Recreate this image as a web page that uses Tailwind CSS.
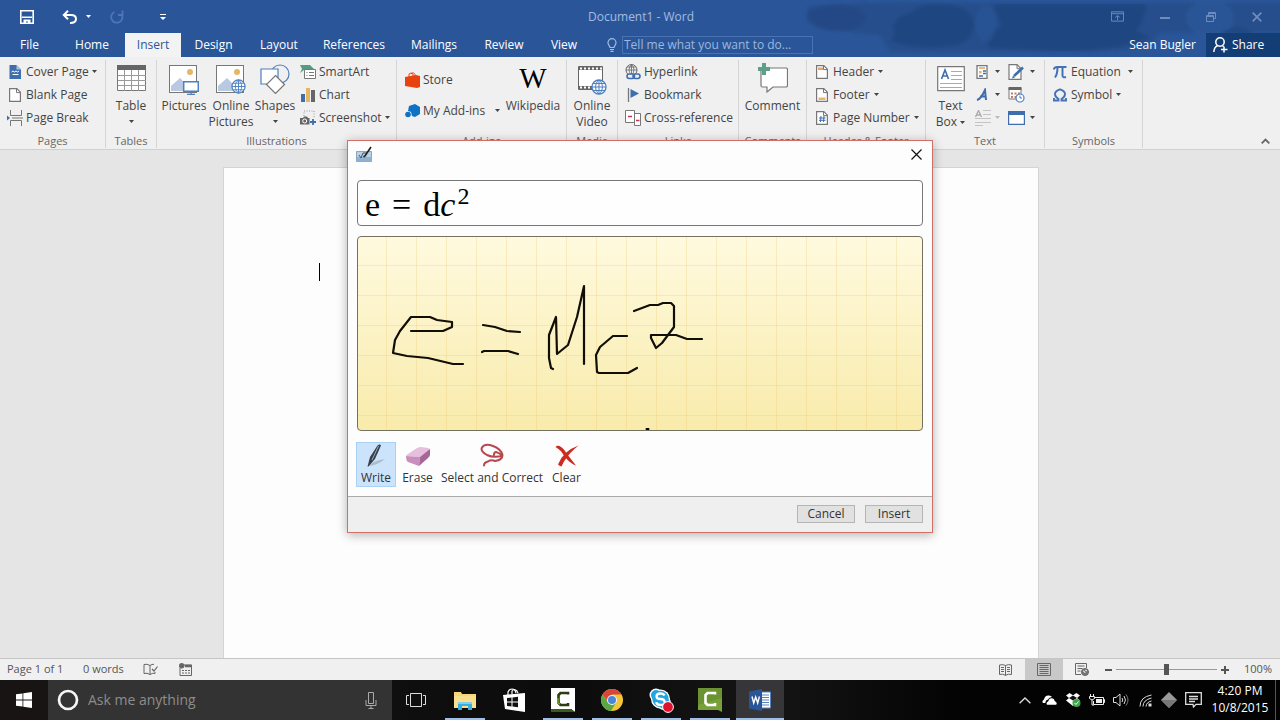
<!DOCTYPE html>
<html lang="en">
<head>
<meta charset="utf-8">
<meta name="viewport" content="width=device-width, initial-scale=1">
<title>Document1 - Word</title>
<script src="https://cdn.jsdelivr.net/npm/@tailwindcss/browser@4"></script>
</head>
<body class="relative flex h-screen min-h-[560px] flex-col overflow-hidden bg-[#e5e5e5] font-['Open_Sans','Noto_Sans',sans-serif] text-xs text-[#444]">

<svg class="hidden" aria-hidden="true">
  <symbol id="arrow" viewBox="0 0 5 3"><path d="M0 0h5L2.5 3z" fill="currentColor"/></symbol>
  <symbol id="globe" viewBox="0 0 16 16"><circle cx="8" cy="8" r="7" fill="#fff" stroke="#4d7fc1" stroke-width="1.3"/><path d="M8 1v14M1 8h14M2.2 4.5h11.6M2.2 11.5h11.6M8 1C3.5 4 3.5 12 8 15M8 1c4.500 3 4.500 11 0 14" fill="none" stroke="#4d7fc1"/></symbol>
  <symbol id="photo" viewBox="0 0 28 28"><rect x=".5" y=".5" width="27" height="27" fill="#fff" stroke="#777"/><circle cx="21" cy="7" r="3" fill="#e6b667"/><path d="M2 26v-5l9-8 7 7 3-2 5 4v4z" fill="#b9c9e2"/></symbol>
  <symbol id="sheet" viewBox="0 0 12 14"><path d="M.6.6h7.200l3.600 3.600v9.200H.6z" fill="#fff" stroke="#777" stroke-width="1.2"/><path d="M7.500.6v4h4" fill="none" stroke="#777"/></symbol>
</svg>

<header class="relative shrink-0 bg-[#2a5699] text-white">
  <svg class="absolute top-0 right-0 h-[57px] w-[480px]" viewBox="0 0 480 57" fill="#20467f" aria-hidden="true">
    <defs><filter id="soft" x="-5%" y="-20%" width="110%" height="140%"><feGaussianBlur stdDeviation="1.500"/></filter></defs>
    <g filter="url(#soft)">
      <path opacity=".5" d="M8 6Q80 0 200 3h290v30H360q-10 18-60 19H90L80 36 30 30Q0 22 8 6z"/>
      <ellipse cx="36" cy="18" rx="30" ry="13" opacity=".5"/>
      <path opacity=".9" d="M92 26q8-12 20-14 10-10 35-7 25 1 27 20-2 17-18 20-40 6-66-4 8-6 2-15z"/>
      <path opacity=".9" d="M194 4h152q-2 20-10 26l14 8q-40 14-90 13l-70-3-6-9 18-14q-6-10-8-21z"/>
      <ellipse cx="410" cy="18" rx="24" ry="18" fill="#2a5699" opacity=".8"/>
      <ellipse cx="186" cy="24" rx="10" ry="18" fill="#2a5699" opacity=".6"/>
      <path d="M422 32q16-10 32 2h-32z" opacity=".7"/>
    </g>
  </svg>
  <div class="relative flex h-[33px] items-center">
    <nav aria-label="Quick access" class="flex flex-1 items-center pl-5">
      <button aria-label="Save"><svg class="h-[14px] w-[14px]" viewBox="0 0 14 14"><path d="M.8.8h12.400v12.400H.8z" fill="none" stroke="#fff" stroke-width="1.600"/><path d="M2 6.500h10V8H2zM3.500 9.500h7v4H8v-2H6v2H3.500z" fill="#fff"/></svg></button>
      <button aria-label="Undo" class="ml-7"><svg class="h-[14px] w-4" viewBox="0 0 16 14" fill="none" stroke="#fff" stroke-width="2"><path d="M6 .8L1.800 5 6 9.200M2 5h7q5 0 5 4t-6 4"/></svg></button>
      <button aria-label="Undo list" class="ml-2"><svg class="h-[3px] w-[5px]"><use href="#arrow"/></svg></button>
      <button aria-label="Repeat" class="ml-[19px] text-[#5075b6]"><svg class="h-[14px] w-[14px]" viewBox="0 0 14 14" fill="none" stroke="currentColor" stroke-width="1.800"><path d="M4.500 2A5.600 5.600 0 1 0 12 5M8 5h4.500V.5"/></svg></button>
      <button aria-label="Customize" class="ml-9"><svg class="h-[6px] w-[6px]" viewBox="0 0 6 6" fill="#fff"><path d="M0 0h6v1H0zM0 3h6L3 6z"/></svg></button>
    </nav>
    <h1 class="text-[#a3bbe0]">Document1 - Word</h1>
    <div class="flex flex-1 items-center justify-end gap-9 pr-[18px] text-[#6f8cbf]">
      <button aria-label="Ribbon display options"><svg class="h-[11px] w-[13px]" viewBox="0 0 14 11" fill="none" stroke="currentColor"><path d="M.5.5h13v10H.5zM.5 2.500h13M7 9.500V5M4.500 6.500L7 4.500l2.500 2"/></svg></button>
      <button aria-label="Minimize"><svg class="h-[10px] w-[10px]" viewBox="0 0 10 10" fill="currentColor"><path d="M0 5h10v2H0z"/></svg></button>
      <button aria-label="Restore"><svg class="h-[10px] w-[10px]" viewBox="0 0 10 10" fill="none" stroke="currentColor"><path d="M.5 3.500h7v6h-7zM.5 4.500h7M2.500 3V.5h7v6H8M2.500 1.500h7"/></svg></button>
      <button aria-label="Close"><svg class="h-[10px] w-[10px]" viewBox="0 0 10 10" fill="none" stroke="currentColor" stroke-width="1.700"><path d="M.7.7l8.600 8.600M9.300.7L.7 9.300"/></svg></button>
    </div>
  </div>
  <div class="relative flex h-6 items-stretch">
    <nav aria-label="Ribbon tabs" class="flex">
      <button class="w-[59px]">File</button>
      <button class="w-[66px]">Home</button>
      <button class="w-14 bg-[#f3f3f3] text-[#2a5699]">Insert</button>
      <button class="w-[65px]">Design</button>
      <button class="w-[66px]">Layout</button>
      <button class="w-[84px]">References</button>
      <button class="w-[76px]">Mailings</button>
      <button class="w-16">Review</button>
      <button class="w-14">View</button>
    </nav>
    <label for="tell" class="ml-[15px] flex w-[15px] items-center" aria-label="Tell me"><svg class="h-[14px] w-[10px]" viewBox="0 0 10 14" fill="none" stroke="#a3bbe0" stroke-width="1.200"><path d="M3 9.500C3 8 1 7 1 4.700a4 4 0 0 1 8 0C9 7 7 8 7 9.500zM3 11.500h4M3.500 13.300h3"/></svg></label>
    <input id="tell" type="text" placeholder="Tell me what you want to do..." class="mt-[3px] h-[18px] w-[191px] border border-[#4a71b0] px-px pb-px text-xs text-white outline-none placeholder:text-[#9db6de]">
    <div class="ml-auto flex items-center">
      <a href="#account" class="mr-[10px]">Sean Bugler</a>
      <button class="flex h-6 w-[74px] items-center gap-1 bg-[#133d75] pl-[7px]"><svg class="h-4 w-[15px]" viewBox="0 0 15 16" fill="none" stroke="#fff" stroke-width="1.500"><circle cx="7" cy="5" r="4.200"/><path d="M5 8.500Q1 10 .8 15M9 8.500l1.500 1M11 9.500v6M8 12.500h6.500"/></svg>Share</button>
    </div>
  </div>
</header>

<section aria-label="Insert ribbon" class="flex h-[93px] shrink-0 border-b border-[#d0d0d0] bg-[#f0f0f0] pt-[3px] pb-px leading-4">
  <div class="flex w-[106px] shrink-0 flex-col border-r border-[#d5d5d5]">
    <div class="flex h-[74px] flex-col pl-[7px]">
      <button class="flex h-[23px] items-center gap-[3px]"><svg class="h-[14px] w-4" viewBox="0 0 16 14"><path d="M2.500 0h7L14 4.500V14H2.500z" fill="#3f6eae"/><path d="M9.500 0v4.500H14" fill="#a9c2e4"/><path d="M4.500 7l1.500-1 1.500 1L9 6l1.500 1L12 6M5.500 9.500h6" stroke="#fff" fill="none"/></svg>Cover Page<svg class="h-[3px] w-[5px]"><use href="#arrow"/></svg></button>
      <button class="flex h-[23px] items-center gap-[3px]"><svg class="h-[14px] w-4"><use href="#sheet"/></svg>Blank Page</button>
      <button class="flex h-[23px] items-center gap-[3px]"><svg class="h-4 w-4" viewBox="0 0 16 16" fill="none" stroke="#777"><path d="M3.500 0v5.500h11V0M3.500 16v-5.500h11V16M5 8h11"/><path d="M0 5.500v5L3 8z" fill="#3f6eae" stroke="none"/></svg>Page Break</button>
    </div>
    <h2 class="text-center text-[11px] leading-[14px] text-[#666]">Pages</h2>
  </div>
  <div class="flex w-[51px] shrink-0 flex-col border-r border-[#d5d5d5]">
    <button class="flex h-[74px] flex-col items-center pt-[5px]"><svg class="mb-[6px] h-[27px] w-[29px] shrink-0" viewBox="0 0 29 27"><path d="M.5.5h28v25H.5z" fill="#fff" stroke="#777"/><path d="M0 0h29v5H0z" fill="#666"/><path d="M7.500 5v21M14.500 5v21M21.500 5v21M1 10.500h28M1 15.500h28M1 20.500h28" stroke="#999"/></svg>Table<svg class="mt-1.5 h-[3px] w-[5px] shrink-0"><use href="#arrow"/></svg></button>
    <h2 class="text-center text-[11px] leading-[14px] text-[#666]">Tables</h2>
  </div>
  <div class="flex w-[240px] shrink-0 flex-col border-r border-[#d5d5d5]">
    <div class="flex h-[74px] pl-1">
      <button class="flex w-[46px] flex-col items-center whitespace-nowrap pt-[5px]"><svg class="mb-[3px] h-[30px] w-[30px] shrink-0" viewBox="0 0 30 30"><use href="#photo" width="28" height="28"/><path d="M14.700 16.700h14.600v9.600H14.700z" fill="#fff" stroke="#4d7fc1" stroke-width="1.500"/><path d="M22 26v3M18 29.300h8" stroke="#4d7fc1" stroke-width="1.300"/></svg>Pictures</button>
      <button class="flex w-[48px] flex-col items-center whitespace-nowrap pt-[5px]"><svg class="mb-[3px] h-[30px] w-[30px] shrink-0" viewBox="0 0 30 30"><use href="#photo" width="28" height="28"/><use href="#globe" x="15" y="14" width="15" height="15"/></svg><span>Online<br>Pictures</span></button>
      <button class="flex w-[40px] flex-col items-center whitespace-nowrap pt-1"><svg class="mb-1 h-[30px] w-[30px] shrink-0" viewBox="0 0 30 30" fill="#fff" stroke="#4d7fc1" stroke-width="1.200"><circle cx="20" cy="10" r="9" fill="#f0f0f0"/><path d="M1 5h17v15H1z"/><path d="M15.500 11.500l9 9-9 9-9-9z" stroke="#777" /></svg>Shapes<svg class="mt-1.5 h-[3px] w-[5px] shrink-0"><use href="#arrow"/></svg></button>
      <div class="ml-[5px] flex flex-col whitespace-nowrap">
        <button class="flex h-[23px] items-center gap-[3px]"><svg class="h-4 w-4" viewBox="0 0 16 16"><path d="M0 1h10l4 4h-4v3H4V6L0 9l2-4z" fill="#579c80"/><path d="M4.500 5.500h11v9h-11z" fill="#fff" stroke="#777"/><path d="M6.500 8.500h1M9 8.500h5M6.500 11.500h1M9 11.500h5" stroke="#777"/></svg>SmartArt</button>
        <button class="flex h-[23px] items-center gap-[3px]"><svg class="h-[14px] w-4" viewBox="0 0 16 14"><path d="M1 6h4v8H1z" fill="#3f6eae"/><path d="M6 0h4v14H6z" fill="#e6b667"/><path d="M11 2h4v12h-4z" fill="#666"/></svg>Chart</button>
        <button class="flex h-[23px] items-center gap-[3px]"><svg class="h-4 w-4" viewBox="0 0 16 16"><path d="M4 6V1h10v7" fill="none" stroke="#999" stroke-dasharray="1 1.500"/><path d="M0 8h3l1-1.500h3L8 8h1.500v6.500H0z" fill="#666"/><circle cx="4.700" cy="11" r="2" fill="#666" stroke="#fff"/><path d="M13 9v6M10 12h6" stroke="#3f6eae" stroke-width="1.800"/></svg>Screenshot<svg class="h-[3px] w-[5px]"><use href="#arrow"/></svg></button>
      </div>
    </div>
    <h2 class="text-center text-[11px] leading-[14px] text-[#666]">Illustrations</h2>
  </div>
  <div class="flex w-[170px] shrink-0 flex-col border-r border-[#d5d5d5]">
    <div class="flex h-[74px] pl-2">
      <div class="flex w-[95px] flex-col gap-2 pt-2 whitespace-nowrap">
        <button class="flex h-[23px] items-center gap-[3px]"><svg class="h-4 w-[15px]" viewBox="0 0 15 16"><path d="M0 5l11-2 4 1v11l-3 1-12-2z" fill="#e8420f"/><path d="M4 6V2q2-2 4 0v3M6 1.500q3-2 4 1v2" fill="none" stroke="#e8420f"/></svg>Store</button>
        <button class="flex h-[23px] items-center gap-[3px]"><svg class="h-[14px] w-[15px]" viewBox="0 0 15 14" fill="#1072c4"><path d="M4 2l6-2 5 3v7l-5 3-3-1-1-4-3-1z"/><circle cx="3" cy="10.500" r="2.800"/></svg>My Add-ins<svg class="mr-0 ml-auto h-[3px] w-[5px]"><use href="#arrow"/></svg></button>
      </div>
      <button class="flex flex-1 flex-col items-center pt-[3px]"><span class="mb-[5px] h-[30px] font-['Liberation_Serif',serif] text-[29px] leading-[31px] text-black">W</span>Wikipedia</button>
    </div>
    <h2 class="text-center text-[11px] leading-[14px] text-[#666]">Add-ins</h2>
  </div>
  <div class="flex w-[51px] shrink-0 flex-col border-r border-[#d5d5d5]">
    <button class="flex h-[74px] flex-col items-center pt-[6px]"><svg class="mb-[2px] h-[30px] w-[29px] shrink-0" viewBox="0 0 29 30"><path d="M.5.5h24v23H.5z" fill="#fff" stroke="#666"/><path d="M1 2.500h23M1 21.500h23" stroke="#666" stroke-width="3"/><path d="M2 2.500h22M2 21.500h22" stroke="#fff" stroke-width="2" stroke-dasharray="2 2"/><use href="#globe" x="13" y="13" width="16" height="16"/></svg><span>Online<br>Video</span></button>
    <h2 class="text-center text-[11px] leading-[14px] text-[#666]">Media</h2>
  </div>
  <div class="flex w-[121px] shrink-0 flex-col border-r border-[#d5d5d5]">
    <div class="flex h-[74px] flex-col pl-[7px] whitespace-nowrap">
      <button class="flex h-[23px] items-center gap-[3px]"><svg class="h-4 w-4" viewBox="0 0 16 16" fill="none"><circle cx="6.500" cy="6" r="5.500" stroke="#666"/><path d="M1 6h11M6.500.5v11M2 3h9M6.500.5q-5 5 0 11M6.500.5q5 5 0 11" stroke="#666" stroke-width=".8"/><rect x="2" y="10" width="7.500" height="4.500" rx="2.200" stroke="#3f6eae" stroke-width="1.600" fill="#f0f0f0"/><rect x="8" y="10" width="7" height="4.500" rx="2.200" stroke="#3f6eae" stroke-width="1.600"/></svg>Hyperlink</button>
      <button class="flex h-[23px] items-center gap-[3px]"><svg class="h-[14px] w-4" viewBox="0 0 16 14"><path d="M3.500 0v14" stroke="#777" stroke-width="1.300"/><path d="M5.500 1L14 5.500 5.500 10z" fill="#3f6eae"/></svg>Bookmark</button>
      <button class="flex h-[23px] items-center gap-[3px]"><svg class="h-4 w-4" viewBox="0 0 16 16" fill="#fff" stroke="#777"><path d="M9.500 3.500h6v12h-6z"/><path d="M.5.5h9v12h-9z"/><path d="M11 10.500h3.500M3 6.500h4" stroke="#c0394f" stroke-width="1.500"/></svg>Cross-reference</button>
    </div>
    <h2 class="text-center text-[11px] leading-[14px] text-[#666]">Links</h2>
  </div>
  <div class="flex w-[68px] shrink-0 flex-col border-r border-[#d5d5d5]">
    <button class="flex h-[74px] flex-col items-center pt-[3px]"><svg class="mb-[5px] h-[30px] w-[30px] shrink-0" viewBox="0 0 30 30"><path d="M3 5h25q1.500 0 1.500 1.500v16q0 1.500-1.500 1.500H15l-6 5v-5H4.500Q3 24 3 22.500z" fill="#fff" stroke="#777" stroke-width="1.200"/><path d="M6 0v12M0 6h12" stroke="#5d9f8b" stroke-width="4"/></svg>Comment</button>
    <h2 class="text-center text-[11px] leading-[14px] text-[#666]">Comments</h2>
  </div>
  <div class="flex w-[119px] shrink-0 flex-col border-r border-[#d5d5d5]">
    <div class="flex h-[74px] flex-col pl-2 whitespace-nowrap">
      <button class="flex h-[23px] items-center gap-1"><svg class="h-[14px] w-[14px]" viewBox="0 0 14 14"><use href="#sheet" x="1" width="12" height="14"/><path d="M3 2.500h5v2.500H3z" fill="#e6a567"/></svg>Header<svg class="h-[3px] w-[5px]"><use href="#arrow"/></svg></button>
      <button class="flex h-[23px] items-center gap-1"><svg class="h-[14px] w-[14px]" viewBox="0 0 14 14"><use href="#sheet" x="1" width="12" height="14"/><path d="M3.500 9.500h7V12h-7z" fill="#e6b667"/></svg>Footer<svg class="h-[3px] w-[5px]"><use href="#arrow"/></svg></button>
      <button class="flex h-[23px] items-center gap-1"><svg class="h-[14px] w-[14px]" viewBox="0 0 14 14"><use href="#sheet" x="1" width="12" height="14"/><path d="M6 5l-.5 6M9 5l-.5 6M4 7h6.500M4 9.300h6.500" stroke="#3f6eae"/></svg>Page Number<svg class="h-[3px] w-[5px]"><use href="#arrow"/></svg></button>
    </div>
    <h2 class="text-center text-[11px] leading-[14px] text-[#666]">Header &amp; Footer</h2>
  </div>
  <div class="flex w-[119px] shrink-0 flex-col border-r border-[#d5d5d5]">
    <div class="flex h-[74px]">
      <button class="flex w-[49px] flex-col items-center pt-[5px]"><svg class="mb-[6px] h-[27px] w-[28px] shrink-0" viewBox="0 0 28 27"><path d="M.7 1.700h26.600v24H.7z" fill="#fff" stroke="#777" stroke-width="1.200"/><path d="M4.500 14L8 5l3.500 9M5.500 11h5" fill="none" stroke="#3f6eae" stroke-width="1.600"/><path d="M14 6.500h11M14 10.500h11M14 14.500h11M3 18.500h22M3 22.500h22" stroke="#aaa"/></svg><span>Text<br>Box <svg class="inline h-[3px] w-[5px] align-middle"><use href="#arrow"/></svg></span></button>
      <div class="flex flex-col">
        <button aria-label="Quick Parts" class="flex h-[23px] w-[31px] items-center gap-[6px]"><svg class="h-[14px] w-[14px]" viewBox="0 0 14 14" fill="none"><path d="M2 .7h10v12.600H2z" fill="#fff" stroke="#777" stroke-width="1.300"/><path d="M4 3h6" stroke="#e6a04f" stroke-width="1.500"/><path d="M4 6h2.500v2.500H4z" fill="#e6b667"/><path d="M8 6h3M8 8.500h3M4 11h4" stroke="#3f6eae" stroke-width="1.300"/></svg><svg class="h-[3px] w-[5px]"><use href="#arrow"/></svg></button>
        <button aria-label="WordArt" class="flex h-[23px] w-[31px] items-center gap-[6px]"><svg class="h-[14px] w-[14px]" viewBox="0 0 14 14" fill="none" stroke="#3f6eae" stroke-width="2"><path d="M2 12q4-1 8-10l1 10M5 8.500h6.500"/></svg><svg class="h-[3px] w-[5px]"><use href="#arrow"/></svg></button>
        <button aria-label="Drop Cap" class="flex h-[23px] w-[31px] items-center gap-1 text-[#bbb]"><svg class="h-4 w-4" viewBox="0 0 16 16" fill="none" stroke="#aaa"><path d="M.5 7L3.500.5 6.500 7M1.500 5h4" stroke-width="1.300"/><path d="M8 .5h8M8 4.500h8M0 8.500h16M0 12.500h16M0 15.500h8" stroke="#c4c4c4"/></svg><svg class="h-[3px] w-[5px]"><use href="#arrow"/></svg></button>
      </div>
      <div class="flex flex-col pl-[2px]">
        <button aria-label="Signature Line" class="flex h-[23px] items-center gap-x-[5px]"><svg class="h-4 w-[17px]" viewBox="0 0 17 16"><path d="M1 .7h8l4 4v10.600H1z" fill="#fff" stroke="#777" stroke-width="1.200"/><path d="M9 .7v4h4" fill="none" stroke="#777"/><path d="M6 12l9-8.500" stroke="#3f6eae" stroke-width="2.600"/><path d="M4 14.500l1-3 2 2z" fill="#3f6eae"/></svg><svg class="h-[3px] w-[5px]"><use href="#arrow"/></svg></button>
        <button aria-label="Date and Time" class="flex h-[23px] items-center"><svg class="h-4 w-[17px]" viewBox="0 0 17 16" fill="none"><path d="M1 1h12v11H1z" fill="#fff" stroke="#777"/><path d="M.5 0h13v3H.5z" fill="#666"/><path d="M3 5.500h2v2H3zM6.500 5.500h2v2h-2zM10 5.500h2v2h-2zM3 9h2v2H3zM6.500 9h2v2h-2z" fill="#cf7a52"/><circle cx="12" cy="11" r="4" fill="#fff" stroke="#4d7fc1" stroke-width="1.200"/><path d="M12 8.500V11h2" stroke="#4d7fc1"/></svg></button>
        <button aria-label="Object" class="flex h-[23px] items-center gap-x-[5px]"><svg class="h-[14px] w-[17px]" viewBox="0 0 17 14"><path d="M.6.6h15.800v12.800H.6z" fill="#fff" stroke="#3f6eae" stroke-width="1.200"/><path d="M0 0h17v4H0z" fill="#3f6eae"/></svg><svg class="h-[3px] w-[5px]"><use href="#arrow"/></svg></button>
      </div>
    </div>
    <h2 class="text-center text-[11px] leading-[14px] text-[#666]">Text</h2>
  </div>
  <div class="flex w-[98px] shrink-0 flex-col border-r border-[#d5d5d5]">
    <div class="flex h-[74px] flex-col pl-2 whitespace-nowrap">
      <button class="flex h-[23px] items-center gap-1"><svg class="h-[14px] w-[14px]" viewBox="0 0 14 14" fill="none" stroke="#4472b8" stroke-width="2"><path d="M.5 4.500Q1.500 2 4 2h9.500M4.500 2.500Q4.500 9 2 12.500M9.500 2.500v8q0 2.500 3.500 1.500"/></svg>Equation<svg class="mr-[9px] ml-auto h-[3px] w-[5px]"><use href="#arrow"/></svg></button>
      <button class="flex h-[23px] items-center gap-1"><svg class="h-[14px] w-[14px]" viewBox="0 0 14 14" fill="none" stroke="#4472b8" stroke-width="1.900"><path d="M1 10v2.500h4.500V11Q2 9 2 6t5-4.700Q12 3 12 6t-3.500 5v1.500H13V10"/></svg>Symbol<svg class="h-[3px] w-[5px]"><use href="#arrow"/></svg></button>
    </div>
    <h2 class="text-center text-[11px] leading-[14px] text-[#666]">Symbols</h2>
  </div>
  <button aria-label="Collapse the ribbon" class="mt-auto mr-[10px] mb-[4px] ml-auto"><svg class="h-[6px] w-[9px]" viewBox="0 0 9 6" fill="none" stroke="#666" stroke-width="1.800"><path d="M.7 5.300L4.500 1.500l3.800 3.800"/></svg></button>
</section>

<main class="flex min-h-0 flex-1 justify-center overflow-hidden pt-[17px] pr-[18px]">
  <article aria-label="Page 1" class="w-[816px] max-w-full border border-b-0 border-[#d4d4d4] bg-[#fdfdfd] pt-[95px] pl-[95px]"><div class="h-[18px] w-px bg-black"></div></article>
</main>

<footer class="flex h-[22px] shrink-0 items-center border-t border-[#c6c6c6] bg-[#f0f0f0] pl-[7px] text-[11px] text-[#555]">
  <span class="w-[76px]">Page 1 of 1</span>
  <span class="w-[60px]">0 words</span>
  <button aria-label="Proofing"><svg class="h-[13px] w-[15px]" viewBox="0 0 15 13" fill="none" stroke="#666"><path d="M7 2.500Q4 .5 1 1.500v9q3-1 6 1zM7 2.500Q9 1 11 1.300M7 11.500q3-2 5-1V9" /><path d="M9 6l2 2 3.500-4.500" stroke-width="1.200"/></svg></button>
  <button aria-label="Macro recording" class="ml-[21px]"><svg class="h-[13px] w-[13px]" viewBox="0 0 13 13" fill="none" stroke="#666"><path d="M1 5v7.500h11.500V2H5"/><path d="M6 3h7" stroke-width="2.500"/><path d="M3 7.500h8M3 10h8" stroke-dasharray="2 1"/><circle cx="2.700" cy="2.700" r="2.700" fill="#666" stroke="none"/></svg></button>
  <div class="ml-auto flex h-full items-center">
    <button aria-label="Read mode"><svg class="h-3 w-[13px]" viewBox="0 0 13 12" fill="none" stroke="#666"><path d="M6.500 1.500Q4 0 .5 1v9.500q3-1 6 .8 3-1.800 6-.8V1q-3.500-1-6 .5zM6.500 1.500v10M2 3.500h3M2 5.500h3M2 7.500h3M8 3.500h3M8 5.500h3M8 7.500h3"/></svg></button>
    <button aria-label="Print layout" class="ml-[13px] flex h-full w-[38px] items-center justify-center bg-[#c8c8c8]"><svg class="h-[13px] w-[14px]" viewBox="0 0 14 13" fill="none" stroke="#666"><path d="M.5.5h13v12H.5zM2.500 2.500h9M2.500 4.500h9M2.500 6.500h9M2.500 8.500h9M2.500 10.500h9"/></svg></button>
    <button aria-label="Web layout" class="ml-3"><svg class="h-[13px] w-[14px]" viewBox="0 0 14 13" fill="none" stroke="#666"><path d="M6 11.500H.5V.5h11V5M2.500 3h7M2.500 5.500h5M2.500 8h3"/><circle cx="10" cy="9" r="3.500" fill="#777"/><path d="M8 8q2 0 2 2M10 7l2 1" stroke="#eee"/></svg></button>
    <button aria-label="Zoom out" class="ml-4"><svg class="h-2 w-[7px]" viewBox="0 0 7 8" fill="#555"><path d="M0 3h7v2H0z"/></svg></button>
    <input type="range" aria-label="Zoom" min="0" max="100" value="50" class="mx-1 h-3 w-[101px] appearance-none bg-[linear-gradient(#999,#999)] bg-[length:100%_1px] bg-center bg-no-repeat [&::-webkit-slider-thumb]:h-[11px] [&::-webkit-slider-thumb]:w-[5px] [&::-webkit-slider-thumb]:appearance-none [&::-webkit-slider-thumb]:bg-[#555]">
    <button aria-label="Zoom in"><svg class="h-2 w-2" viewBox="0 0 8 8" fill="#555"><path d="M3 0h2v3h3v2H5v3H3V5H0V3h3z"/></svg></button>
    <span class="w-[51px] pr-[8px] text-right">100%</span>
  </div>
</footer>

<nav aria-label="Taskbar" class="flex h-10 shrink-0 items-stretch bg-[linear-gradient(90deg,#181414,#0c0c0c_45%,#151515_60%,#030303_75%)] text-white">
  <button aria-label="Start" class="flex w-12 items-center justify-center"><svg class="h-4 w-4" viewBox="0 0 16 16" fill="#fff"><path d="M0 2.300L6.500 1.400v6.100H0zM7.300 1.300L16 0v7.500H7.300zM0 8.400h6.500v6.200L0 13.700zM7.300 8.400H16V16l-8.700-1.300z"/></svg></button>
  <label for="ask" class="flex w-[344px] items-center bg-[#333] pl-[9px]">
    <svg class="h-[22px] w-[22px] shrink-0" viewBox="0 0 22 22"><circle cx="11" cy="11" r="9" fill="none" stroke="#f5f5f5" stroke-width="2.700"/></svg>
    <input id="ask" type="text" placeholder="Ask me anything" class="ml-[9px] min-w-0 flex-1 bg-transparent text-sm outline-none placeholder:text-[#8d8d8d]">
    <svg class="mr-[15px] h-[17px] w-3 shrink-0" viewBox="0 0 12 17" fill="none" stroke="#aaa"><path d="M3.500.5h5v11h-5zM1 8v5.500h10V8M6 13.500v3M3.500 16.500h5"/></svg>
  </label>
  <button aria-label="Task view" class="flex w-12 items-center justify-center"><svg class="h-[14px] w-5" viewBox="0 0 20 14" fill="none" stroke="#ddd"><path d="M4.500.5h11v13h-11zM3 2.500H.5v9H3M17 2.500h2.500v9H17"/></svg></button>
  <button aria-label="File Explorer" class="flex w-[50px] items-center justify-center"><span class="flex h-full w-10 items-center justify-center border-t-2 border-b-2 border-t-transparent border-b-[#9fbfe8]"><svg class="h-[19px] w-[22px]" viewBox="0 0 22 19"><path d="M0 1h7l1 2h14v14H0z" fill="#f5d877"/><path d="M0 5h22v12H0z" fill="#f8e08e"/><path d="M4 19v-8h14v8h-4v-4H8v4z" fill="#3aaee0"/><path d="M4 11h14v2H4z" fill="#7fd0ef"/></svg></span></button>
  <button aria-label="Store" class="flex w-12 items-center justify-center"><svg class="h-6 w-[22px]" viewBox="0 0 22 24"><path d="M0 7l22-2v19L2 21z" fill="#fff"/><path d="M5 7V4q1-3 4-3t4 4M9 6V3q2-3 5 0l1 2" fill="none" stroke="#fff" stroke-width="1.200"/><path d="M4 10l4.500-.5v4H4zM9.500 9.400l5.500-.6v4.700H9.500zM4 14.500h4.500v4L4 18zM9.500 14.500H15v4.800l-5.500-.7z" fill="#111"/></svg></button>
  <button aria-label="Camtasia" class="flex w-[50px] items-center justify-center"><span class="flex h-full w-10 items-center justify-center border-t-2 border-b-2 border-t-transparent border-b-[#9fbfe8]"><svg class="h-6 w-6" viewBox="0 0 24 24"><path d="M0 0h24v24l-4-3H0z" fill="#fff"/><path d="M0 21h20l4 3H0z" fill="#3c5a1b"/><path d="M17 6.500V5H9.500L7.500 7v8l2 2H17v-2" fill="none" stroke="#2d3d12" stroke-width="2.600"/><path d="M7 10v5l2 1" fill="none" stroke="#79a52c" stroke-width="1.500"/></svg></span></button>
  <button aria-label="Chrome" class="flex w-12 items-center justify-center"><span class="flex h-full w-10 items-center justify-center border-t-2 border-b-2 border-t-transparent border-b-[#9fbfe8]"><svg class="h-[22px] w-[22px]" viewBox="0 0 22 22"><circle cx="11" cy="11" r="11" fill="#f2c53a"/><path d="M1.500 5.500A11 11 0 0 1 20.500 5.500H11L7 13z" fill="#d8453a"/><path d="M1.500 5.500A11 11 0 0 0 10 22l5-8.500-8 0z" fill="#5ba843"/><circle cx="11" cy="11" r="5" fill="#f3f3f3"/><circle cx="11" cy="11" r="4" fill="#4c86d8"/></svg></span></button>
  <button aria-label="Skype" class="flex w-[50px] items-center justify-center"><span class="flex h-full w-10 items-center justify-center border-t-2 border-b-2 border-t-transparent border-b-[#9fbfe8]"><svg class="h-[26px] w-[26px]" viewBox="0 0 26 26"><g fill="#fff"><circle cx="8" cy="8" r="6.500"/><circle cx="16" cy="16" r="7"/><circle cx="12.500" cy="12" r="9.500"/></g><g fill="#22a5e0"><circle cx="8" cy="8" r="5"/><circle cx="16" cy="16" r="5.500"/><circle cx="12.500" cy="12" r="8.200"/></g><path d="M16.500 8.500q-1-2-4-2-4 0-4 2.700t4 2.800 4.200 3-4 3q-4 0-4.500-2.700" fill="none" stroke="#fff" stroke-width="2.300"/><circle cx="20" cy="20" r="5.400" fill="#e0122d" stroke="#fff"/></svg></span></button>
  <button aria-label="Camtasia recorder" class="flex w-12 items-center justify-center"><span class="flex h-full w-10 items-center justify-center border-t-2 border-b-2 border-t-transparent border-b-[#9fbfe8]"><svg class="h-6 w-6" viewBox="0 0 24 24"><path d="M0 0h24v24l-4-2H0z" fill="#79a13a"/><path d="M0 0h24v10L0 17z" fill="#6b9332"/><path d="M17 6.500V5H9.500L7.500 7v8l2 2H17v-2" fill="none" stroke="#fff" stroke-width="2.600"/></svg></span></button>
  <button aria-label="Word" class="ml-0.5 flex w-12 items-center justify-center border-t-2 border-b-2 border-t-[#363638] border-b-[#9fbfe8] bg-[#363638]"><svg class="h-[22px] w-[22px]" viewBox="0 0 22 22"><path d="M12 3h9.500v16H12z" fill="#fff" stroke="#5b82c0"/><path d="M13 6h7M13 8.500h7M13 11h7M13 13.500h7M13 16h7" stroke="#5b82c0"/><path d="M0 2.500L13 0v22L0 19.500z" fill="#2a5699"/><path d="M3 7.500L4.700 14l2-6 2 6 1.700-6.500" fill="none" stroke="#fff" stroke-width="1.400"/></svg></button>
  <div class="ml-auto flex items-center">
    <button aria-label="Show hidden icons" class="flex w-6 justify-center"><svg class="h-[7px] w-3" viewBox="0 0 12 7" fill="none" stroke="#ddd" stroke-width="1.300"><path d="M.6 6.300L6 1l5.400 5.300"/></svg></button>
    <button aria-label="OneDrive" class="flex w-6 justify-center"><svg class="h-[10px] w-[15px]" viewBox="0 0 15 10" fill="#fff"><path d="M1 8Q-.5 6 2 4.500 3 0 7 .5q2 0 3 1.500-3 0-4 2.500Q3 5 3.500 8z"/><path d="M5 9.800Q3.500 8 6.500 6 7 3 10 3.300q2.300.2 2.700 2.700 3.300 2 1.300 3.800z"/></svg></button>
    <button aria-label="Dropbox" class="flex w-6 justify-center"><svg class="h-[14px] w-4" viewBox="0 0 16 14"><path d="M4.500 0L8 2.300 11.500 0 15 2.500 12 5l3 2.500L8 13 1 7.500 4 5 1 2.500z" fill="#fff"/><path d="M8 2.500L12 5 8 7.500 4 5z" fill="#111"/><circle cx="11.500" cy="10" r="4" fill="#3fa648"/><path d="M9.500 10l1.500 1.500 2.500-3" fill="none" stroke="#fff"/></svg></button>
    <button aria-label="Battery" class="flex w-6 justify-center"><svg class="h-3 w-4" viewBox="0 0 16 12" fill="none" stroke="#eee"><path d="M6 3.500h8.500v7H4.500V7M14.500 5.500h1v3h-1M1.500 0v2.500M4.500 0v2.500M.5 2.500h5v2L3 6 .5 4.500zM3 6v5h2"/><path d="M7 5h6v4H7z" fill="#eee" stroke="none"/></svg></button>
    <button aria-label="Volume" class="flex w-6 justify-center"><svg class="h-[14px] w-4" viewBox="0 0 16 14" fill="none" stroke="#ddd"><path d="M.5 4.500h2.500l4-3.500v12L3 9.500H.5zM9 5q1.500 2 0 4M11 3q3 4 0 8"/><path d="M13 1.500q4 5.500 0 11" stroke="#777"/></svg></button>
    <button aria-label="Network" class="flex w-6 justify-center"><svg class="h-[13px] w-[13px]" viewBox="0 0 13 13" fill="none" stroke="#ddd"><path d="M1 12.500Q1 3 12.500 1M4 12.500Q4 6 12.500 4M7 12.500Q7.500 8 12.500 7"/><path d="M9.500 9.500h3v3h-3z" fill="#ddd" stroke="none"/></svg></button>
    <button aria-label="Diamond" class="flex w-6 justify-center"><svg class="h-4 w-4" viewBox="0 0 16 16"><path d="M8 0l8 8-8 8-8-8z" fill="#999"/><path d="M0 8h16l-8 8z" fill="#777"/></svg></button>
    <button aria-label="Notifications" class="flex w-6 justify-center"><svg class="h-4 w-[17px]" viewBox="0 0 17 16" fill="none" stroke="#ddd" stroke-width="1.300"><path d="M.7.7h15.600v11.600H11L8.500 15 8 12.300H.7zM4 4.500h9M4 7h9M4 9.500h6"/></svg></button>
    <time datetime="2015-10-08T16:20" class="w-[70px] pb-0.5 text-center leading-[17px]">4:20 PM<br>10/8/2015</time>
    <span class="h-full w-[5px] border-l border-[#555]"></span>
  </div>
</nav>

<div role="dialog" aria-label="Math input" class="absolute top-[140px] left-1/2 flex w-[586px] max-w-full -translate-x-1/2 flex-col border border-[#cf6f66] bg-[#fdfdfd] text-[#333] shadow-[0_2px_10px_rgba(0,0,0,0.3)]">
  <div class="flex h-[39px] items-start justify-between pt-[5px] pr-[10px] pl-2">
    <svg class="h-[17px] w-[17px]" viewBox="0 0 17 17"><path d="M.5 5.500h15v10H.5z" fill="#b7d0e6" stroke="#8aa7c2"/><path d="M1 11h14.500v4.500H1z" fill="#8eb2d2"/><path d="M3 9l2 3 2-5h4" fill="none" stroke="#456"/><path d="M15 1l-6 9-1.500 1" fill="none" stroke="#222" stroke-width="1.700"/></svg>
    <button aria-label="Close dialog" class="mt-[3px]"><svg class="h-[11px] w-[11px]" viewBox="0 0 11 11" stroke="#111" stroke-width="1.200"><path d="M.5.5l10 10M10.500.5l-10 10"/></svg></button>
  </div>
  <div class="mx-[9px] h-[46px] rounded-[4px] border border-[#777] bg-[#fefefe] pl-[7px] font-['Liberation_Serif',serif] text-[34px] leading-[48px] text-black"><span>e</span><span class="mx-3">=</span><span>d<i>c</i></span><sup class="ml-[2px] text-2xl">2</sup></div>
  <div class="mx-[9px] mt-[10px] overflow-hidden rounded-[4px] border border-[#74725f] bg-[linear-gradient(90deg,rgba(235,190,100,0.25)_1px,transparent_1px),linear-gradient(rgba(235,190,100,0.25)_1px,transparent_1px),linear-gradient(#fffadf,#f8ebab)] bg-[length:30px_30px,30px_30px,auto] bg-[position:28px_0,0_28px,0_0]">
    <svg class="block h-[193px] w-full" viewBox="358 237 564 193" preserveAspectRatio="xMinYMin" fill="none" stroke="#110e05" stroke-width="2.200" stroke-linejoin="round" stroke-linecap="round" role="img" aria-label="Handwritten formula">
      <path d="M411 331H443L452 327V322L437 320 430 317H411L400 331 395 340 393 353 407 356 428 358 453 364H463"/>
      <path d="M483 325L495 327 507 331 520 332M482 352L484 351H508L518 354"/>
      <path d="M553 369L551 368 549 358V335L556 317 557 354 568 345 577 317 582 295 584 286V364"/>
      <path d="M627 336H613L600 347 596 355 597 372 599 373H628L637 368"/>
      <path d="M634 311L650 305H658L663 303H671L674 306V327L662 343 656 348 651 338V335H676L687 339H702"/>
      <path d="M646.500 429h2" stroke="#000" stroke-width="2"/>
    </svg>
  </div>
  <div class="flex h-[65px] items-start px-2 pt-[11px] leading-4">
    <button class="flex h-[45px] w-10 flex-col items-center border border-[#a9d1f5] bg-[#cce4fb]"><svg class="mb-0.5 h-[25px] w-5" viewBox="0 0 20 25"><path d="M3 23q9-1 16-7-8 1-13 4z" fill="#aebccb"/><path d="M11.500 2.500q2.500-2 3.500 0L9 16l-6.500 7.500-1 0L4 14z" fill="#35424e"/><path d="M12.500 3L6 17" stroke="#9aabb8"/></svg>Write</button>
    <button class="flex w-[43px] flex-col items-center pt-px"><svg class="mb-0.5 h-[25px] w-6" viewBox="0 0 24 25"><path d="M0 13q0-1 2-2L11 5q2-1 4-1l7 1q2 0 1.500 2L14 14z" fill="#e7bfdc"/><path d="M0 13l14 1-1 9L2 19q-2-1-2-6z" fill="#c88fbc"/><path d="M14 14L24 6v6q0 1-2 3l-9 8z" fill="#a5679a"/></svg>Erase</button>
    <button class="flex w-[106px] flex-col items-center pt-px whitespace-nowrap"><svg class="mb-0.5 h-[25px] w-6" viewBox="0 0 24 25" fill="none" stroke="#b8484e" stroke-width="2" stroke-linecap="round"><path d="M22 13Q13 15 7 12 0 8 2 4.500 5 0 13 3t9.500 9q0 5-7.500 6-4-1.500-7 .5-4 1-4 4M14 12q0-3 2-3 4 1 6 4"/></svg>Select and Correct</button>
    <button class="flex w-[43px] flex-col items-center pt-px"><svg class="mb-0.5 h-[25px] w-6" viewBox="0 0 24 25" fill="#cc2b22"><path d="M.5 4Q2 2 4.500 3q4 2 7.500 8l9 11.500q-6-2-11-8.500Q5 6 .5 4zM23.500 2.500Q14 10 9 18.500l-2.500 5q-2-.5-3.500-2Q8 8 23.500 2.500z"/></svg>Clear</button>
  </div>
  <div class="flex h-9 items-center justify-end gap-[10px] border-t border-[#aaa] bg-[#efefef] pr-[9px] pb-0.5">
    <button class="h-[18px] w-[58px] border border-[#b5b5b5] bg-[#e1e1e1] leading-4">Cancel</button>
    <button class="h-[18px] w-[58px] border border-[#b5b5b5] bg-[#e1e1e1] leading-4">Insert</button>
  </div>
</div>
</body>
</html>
